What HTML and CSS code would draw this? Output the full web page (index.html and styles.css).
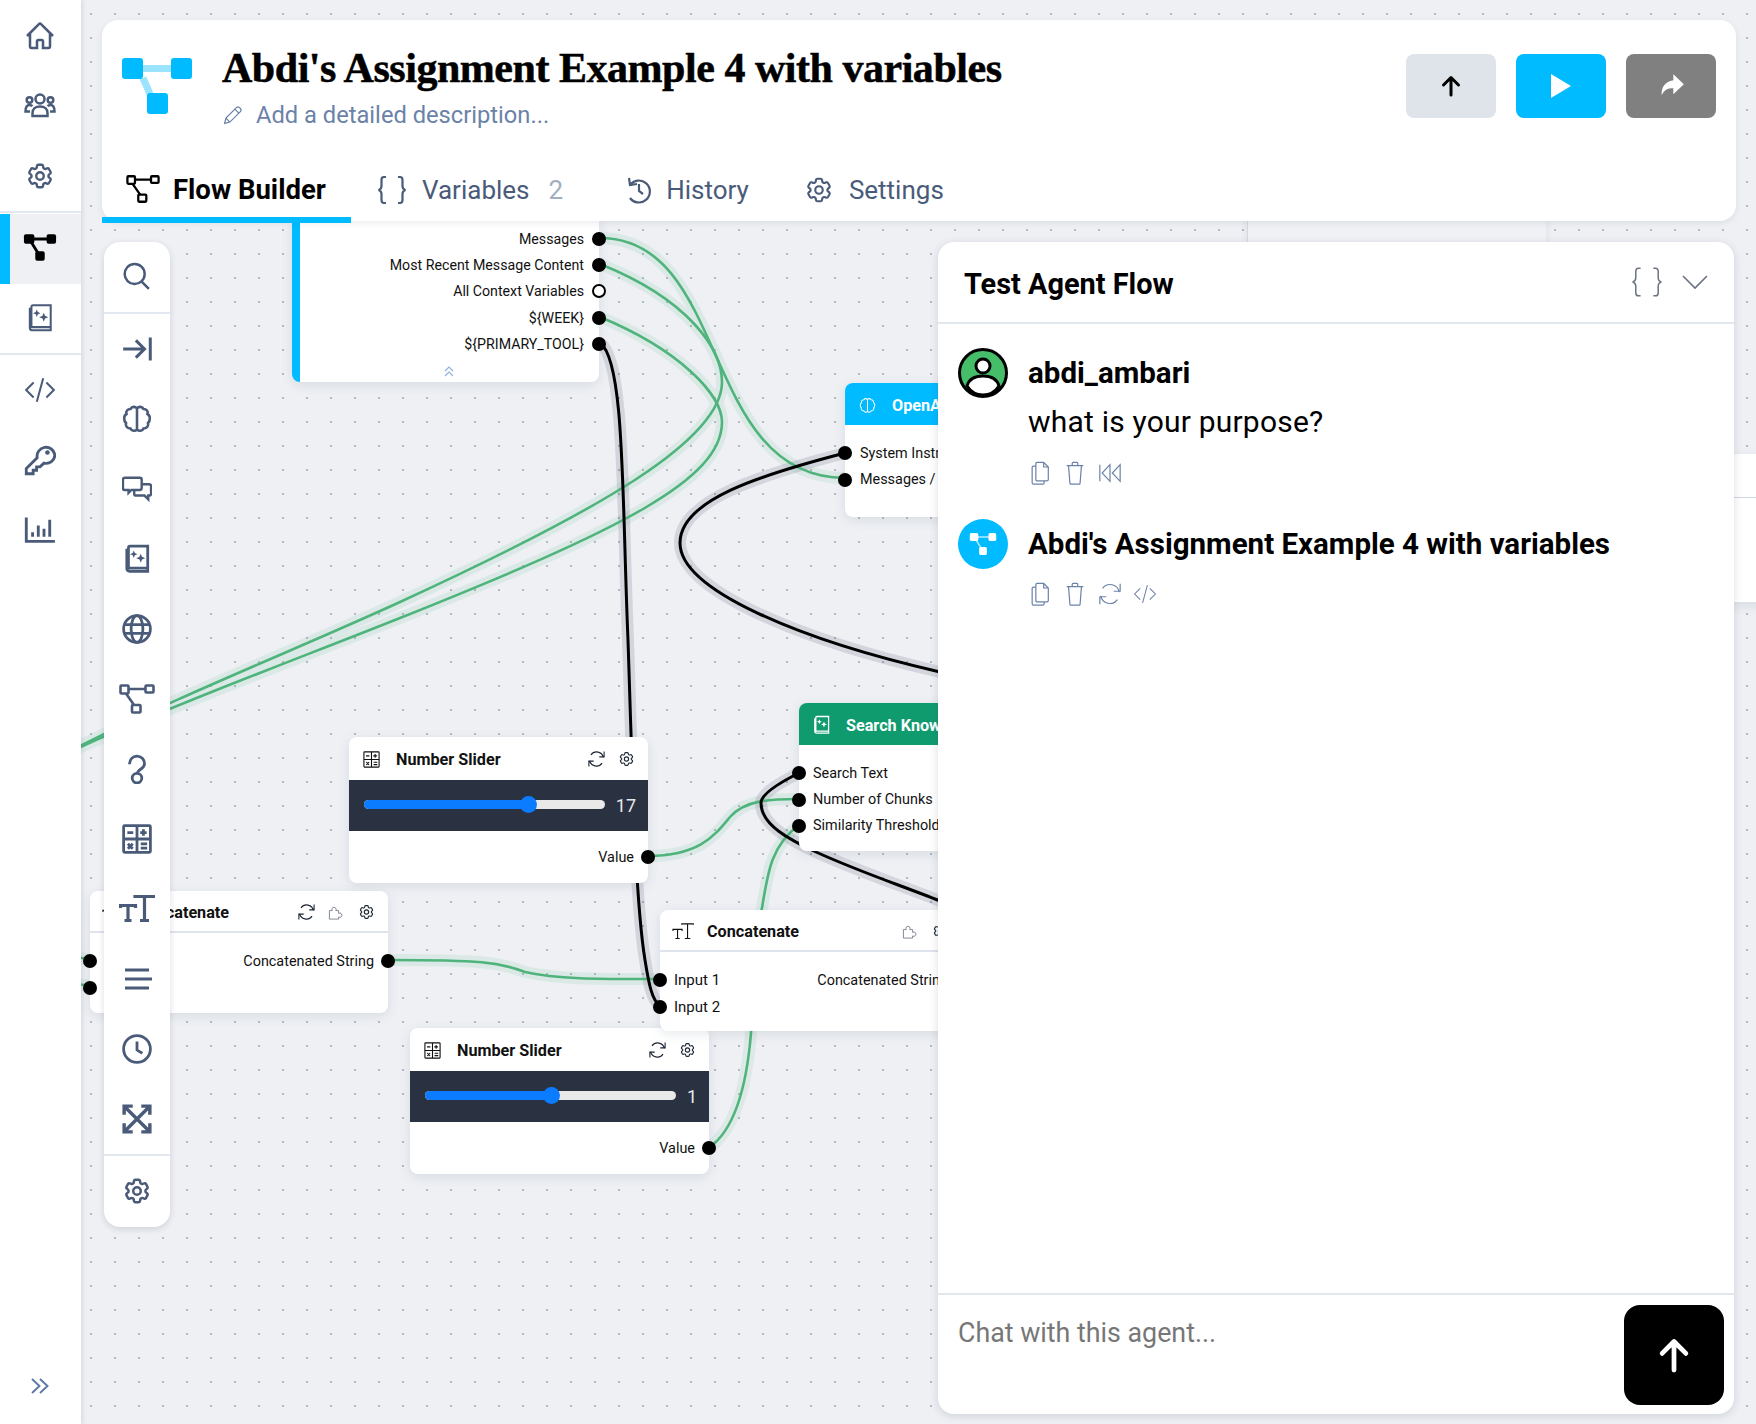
FILE: index.html
```html
<!DOCTYPE html>
<html lang="en">
<head>
	<meta charset="UTF-8">
	<title>Abdi's Assignment Example 4 with variables</title>
	<link rel="stylesheet" href="styles.css">
</head>
<body>
	<svg class="defs" width="0" height="0">
		<symbol id="i-home" viewBox="0 0 24 24"><path d="M2.25 12l8.954-8.955c.44-.439 1.152-.439 1.591 0L21.75 12M4.5 9.75v10.125c0 .621.504 1.125 1.125 1.125H9.75v-4.875c0-.621.504-1.125 1.125-1.125h2.25c.621 0 1.125.504 1.125 1.125V21h4.125c.621 0 1.125-.504 1.125-1.125V9.75"/></symbol>
		<symbol id="i-users" viewBox="0 0 32 28"><circle cx="16" cy="7" r="4.500"/><circle cx="5.500" cy="8" r="2.800"/><circle cx="26.500" cy="8" r="2.800"/><path d="M8.500 24v-3c0-4 3-6.500 7.500-6.500s7.500 2.500 7.500 6.500v3zM6 19.500H1.500c0-4 1.500-6.500 4-6.500 1.200 0 2.200.4 3 1.200M26 19.500h4.500c0-4-1.500-6.500-4-6.500-1.200 0-2.200.4-3 1.200"/></symbol>
		<symbol id="i-gear" viewBox="0 0 24 24"><path d="M9.594 3.94c.09-.542.56-.94 1.11-.94h2.593c.55 0 1.02.398 1.11.94l.213 1.281c.063.374.313.686.645.87.074.04.147.083.22.127.324.196.72.257 1.075.124l1.217-.456a1.125 1.125 0 011.37.49l1.296 2.247a1.125 1.125 0 01-.26 1.431l-1.003.827c-.293.24-.438.613-.431.992a6.759 6.759 0 010 .255c-.007.378.138.75.43.99l1.005.828c.424.35.534.954.26 1.43l-1.298 2.247a1.125 1.125 0 01-1.369.491l-1.217-.456c-.355-.133-.75-.072-1.076.124a6.57 6.57 0 01-.22.128c-.331.183-.581.495-.644.869l-.213 1.28c-.09.543-.56.941-1.11.941h-2.594c-.55 0-1.02-.398-1.11-.94l-.213-1.281c-.062-.374-.312-.686-.644-.87a6.52 6.52 0 01-.22-.127c-.325-.196-.72-.257-1.076-.124l-1.217.456a1.125 1.125 0 01-1.369-.49l-1.297-2.247a1.125 1.125 0 01.26-1.431l1.004-.827c.292-.24.437-.613.43-.992a6.932 6.932 0 010-.255c.007-.378-.138-.75-.43-.99l-1.004-.828a1.125 1.125 0 01-.26-1.43l1.297-2.247a1.125 1.125 0 011.37-.491l1.216.456c.356.133.751.072 1.076-.124.072-.044.146-.087.22-.128.332-.183.582-.495.644-.869l.214-1.281z"/><path d="M15 12a3 3 0 11-6 0 3 3 0 016 0z"/></symbol>
		<symbol id="i-flow" viewBox="0 0 36 30"><rect x="1.500" y="1.500" width="8" height="8" rx="1"/><rect x="26.500" y="1.500" width="8" height="7" rx="1"/><rect x="13" y="21" width="8.500" height="7.500" rx="1"/><path d="M9.500 5h17M7 9.500l8 11.500"/></symbol>
		<symbol id="i-book" viewBox="0 0 24 28"><path d="M4 23V3.500c0-1 .8-1.500 1.500-1.500H22v23.500H5c-1.500 0-2.500-1-2.500-2.500V4.500M3 22.500h19"/><path class="fill" d="M9 6l1 2.500L12.500 9.500 10 10.500 9 13 8 10.500 5.500 9.500 8 8.500zM15.500 9l1.200 3 3 1.200-3 1.200-1.200 3-1.200-3-3-1.200 3-1.200z"/></symbol>
		<symbol id="i-code" viewBox="0 0 30 26"><path d="M9 6L2 13l7 7M21 6l7 7-7 7M18 2l-6 22"/></symbol>
		<symbol id="i-key" viewBox="0 0 28 28"><path d="M27 9.500a7.500 7.500 0 0 1-9.500 7.200L14 20h-3v3H8v3H2v-4.500L11.500 12a7.500 7.500 0 1 1 15.500-2.500z"/><circle class="fill" cx="20.500" cy="7.500" r="2"/></symbol>
		<symbol id="i-chart" viewBox="0 0 28 24"><path d="M2 1v21h25M7.500 18v-4M12.500 18V8M17.500 18v-7M22.500 18V3"/></symbol>
		<symbol id="i-search" viewBox="0 0 24 24"><path d="M21.500 21.500l-6-6m0 0A8 8 0 1 0 4.200 4.200a8 8 0 0 0 11.300 11.300z"/></symbol>
		<symbol id="i-collapse" viewBox="0 0 26 24"><path d="M1 12h18M12 4.500l7.500 7.500-7.500 7.500M24.500 2v20"/></symbol>
		<symbol id="i-brain" viewBox="0 0 30 28"><path d="M15 2v24M15 3.500C13 1 9.500 1.500 8.500 4 5.500 4 3.500 6.500 4.500 9 1.500 10.500 1.500 16 4 18c-1 3 1.500 5.500 4.500 5.500 1 2.500 4.500 3 6.500 1 2 2 5.500 1.500 6.500-1 3 0 5.500-2.500 4.500-5.500 2.500-2 2.500-7.500-.5-9 1-2.500-1-5-4-5-1-2.500-4.500-3-6.500-.500z"/></symbol>
		<symbol id="i-chat" viewBox="0 0 32 28"><path d="M3 2h16c1 0 2 1 2 2v9c0 1-1 2-2 2H10l-3 3v-3H3c-1 0-2-1-2-2V4c0-1 1-2 2-2z"/><path d="M21 9h8c1 0 2 1 2 2v8c0 1-1 2-2 2h-1v4l-4-4h-9c-1 0-2-1-2-2v-4"/></symbol>
		<symbol id="i-globe" viewBox="0 0 28 28"><circle cx="14" cy="14" r="12.500"/><ellipse cx="14" cy="14" rx="5.500" ry="12.500"/><path d="M2.500 10h23M2.500 18h23"/></symbol>
		<symbol id="i-help" viewBox="0 0 20 28"><path d="M3 9.500C3 5 6 2 10 2s7 3 7 7c0 5-6 5-7 9"/><circle cx="10" cy="22.500" r="4.500"/></symbol>
		<symbol id="i-calc" viewBox="0 0 28 28"><rect x="1.500" y="1.500" width="25" height="25" rx="1"/><path d="M14 1.500v25M1.500 14h25M5 8h5.500M17 8h6M20 5v6M5.500 18.500l4.500 4.500M10 18.500L5.500 23M17.500 18.500h6M17.500 22.500h6"/></symbol>
		<symbol id="i-text" viewBox="0 0 36 28"><path d="M16 3V1.500h19V3M25.500 1.500V25M21 25.500h9M1.500 13v-2.500h15V13M9 10.500V25M5.500 25.500h7"/></symbol>
		<symbol id="i-lines" viewBox="0 0 30 22"><path d="M3 2h24M3 11h27M3 20h24"/></symbol>
		<symbol id="i-clock" viewBox="0 0 28 28"><circle cx="14" cy="14" r="12.500"/><path d="M14 7v8l5 3"/></symbol>
		<symbol id="i-expand" viewBox="0 0 28 28"><path d="M3 3l22 22M25 3L3 25M2 10V2h8M18 2h8v8M26 18v8h-8M10 26H2v-8"/></symbol>
		<symbol id="i-chevrons" viewBox="0 0 20 18"><path d="M2 2l7.500 7L2 16M10 2l7.500 7-7.500 7"/></symbol>
		<symbol id="i-pencil" viewBox="0 0 24 24"><path d="M3 21l1.500-6L16.500 3c1-1 2.500-1 3.500 0l1 1c1 1 1 2.500 0 3.500L9 19.500zM15 5l4.500 4.500M4.500 15L9 19.500"/></symbol>
		<symbol id="i-braces" viewBox="0 0 30 30"><path d="M9 2H7C5 2 4.500 3 4.500 5v6c0 2-1 3.500-3 4 2 .5 3 2 3 4v6c0 2 .5 3 2.500 3h2M21 2h2c2 0 2.500 1 2.500 3v6c0 2 1 3.500 3 4-2 .5-3 2-3 4v6c0 2-.5 3-2.500 3h-2"/></symbol>
		<symbol id="i-history" viewBox="0 0 28 30"><path d="M5 3l1 7 7-1M6 10a11 11 0 1 1 0 13M15 9v7l4 3"/></symbol>
		<symbol id="i-copy" viewBox="0 0 20 26"><path d="M7 1.500h7l5 5V20c0 1-.5 1.500-1.500 1.500H7c-1 0-1.500-.5-1.500-1.500V3C5.500 2 6 1.500 7 1.500zM14 1.500v5h5M5.500 5.500H3C2 5.500 1.500 6 1.500 7v16.500c0 1 .5 1.500 1.500 1.500h10c1 0 1.500-.5 1.500-1.500v-2"/></symbol>
		<symbol id="i-trash" viewBox="0 0 20 26"><path d="M1 5h18M3 5l1.500 19c0 .5.5 1 1 1h9c.5 0 1-.5 1-1L17 5M7 5V2.500C7 2 7.500 1.500 8 1.500h4c.5 0 1 .5 1 1V5"/></symbol>
		<symbol id="i-rewind" viewBox="0 0 26 24"><path d="M2 3v18M13 3L4.500 12l8.500 9zM24 3l-8.500 9 8.500 9z"/></symbol>
		<symbol id="i-refresh" viewBox="0 0 24 26"><path d="M22 11a10 10 0 0 0-18-4M2 15a10 10 0 0 0 18 4M23 2v8h-7M1 24v-8h7"/></symbol>
		<symbol id="i-puzzle" viewBox="0 0 24 24"><path d="M2 10h4a3 3 0 1 1 5 0h4v4a3 3 0 1 1 0 5v3H2z"/></symbol>
	</svg>

	<aside class="sidebar">
		<a class="side-item"><svg class="ico"><use href="#i-home"/></svg></a>
		<a class="side-item"><svg class="ico ico-users"><use href="#i-users"/></svg></a>
		<a class="side-item"><svg class="ico ico-m"><use href="#i-gear"/></svg></a>
		<div class="rule"></div>
		<a class="side-item active">
			<svg class="flow-solid" viewBox="0 0 36 30"><path d="M8 6h20M8 8l8 13" stroke="#000" stroke-width="3" fill="none"/><rect x="1" y="1" width="11" height="10" rx="2"/><rect x="25" y="1" width="10" height="10" rx="2"/><rect x="13" y="19" width="10" height="10" rx="2"/></svg>
		</a>
		<a class="side-item"><svg class="ico ico-m"><use href="#i-book"/></svg></a>
		<div class="rule"></div>
		<a class="side-item"><svg class="ico"><use href="#i-code"/></svg></a>
		<a class="side-item"><svg class="ico ico-users"><use href="#i-key"/></svg></a>
		<a class="side-item"><svg class="ico ico-users"><use href="#i-chart"/></svg></a>
		<a class="side-item side-bottom"><svg class="ico ico-s"><use href="#i-chevrons"/></svg></a>
	</aside>

	<main class="canvas">
		<div class="ghost-node"></div>
		<div class="edge-node"></div>

		<svg class="wires" viewBox="81 0 1675 1424">
			<defs>
				<g id="wires-green">
					<path d="M600 238C730 238 700 478 845 478"/>
					<path d="M600 264C690 300 722 350 722 382C722 440 600 510 400 602C300 648 180 695 76 748"/>
					<path d="M600 317C680 350 722 395 722 422C722 480 620 530 400 618C300 658 180 702 76 749"/>
					<path d="M648 856C700 856 715 835 730 817C745 800 770 799 799 799"/>
					<path d="M388 960C480 960 500 962 525 972C560 980 610 979 660 979"/>
					<path d="M710 1147C740 1125 748 1070 751 1033C755 980 755 930 762 908C768 870 772 845 799 825"/>
					<path d="M78 957L90 960M78 984L90 986"/>
				</g>
				<g id="wires-black">
					<path d="M600 343C625 360 622 500 628 640C632 760 635 900 645 960C649 985 652 1000 660 1006"/>
					<path d="M845 453C760 475 680 500 680 543C680 590 800 640 940 672"/>
					<path d="M799 773C775 785 761 795 761 803C761 825 790 840 816 852C860 872 900 885 940 901"/>
				</g>
			</defs>
			<use href="#wires-green" class="halo-green"/>
			<use href="#wires-black" class="halo-black"/>
			<use href="#wires-green" class="line-green"/>
			<use href="#wires-black" class="line-black"/>
		</svg>

		<section class="node node-output">
			<div class="row out">Messages<i class="handle right"></i></div>
			<div class="row out">Most Recent Message Content<i class="handle right"></i></div>
			<div class="row out">All Context Variables<i class="handle right hollow"></i></div>
			<div class="row out">${WEEK}<i class="handle right"></i></div>
			<div class="row out">${PRIMARY_TOOL}<i class="handle right"></i></div>
			<svg class="collapse-up" viewBox="0 0 12 12"><path d="M2 6l4-4 4 4M2 11l4-4 4 4"/></svg>
		</section>

		<section class="node node-openai">
			<header class="node-head blue"><svg class="ico-node"><use href="#i-brain"/></svg><b>OpenAI GPT</b></header>
			<div class="rows">
				<div class="row">System Instructions<i class="handle left"></i></div>
				<div class="row">Messages / Prompt<i class="handle left"></i></div>
			</div>
		</section>

		<section class="node node-search">
			<header class="node-head green"><svg class="ico-node"><use href="#i-book"/></svg><b>Search Knowledge</b></header>
			<div class="rows">
				<div class="row">Search Text<i class="handle left"></i></div>
				<div class="row">Number of Chunks<i class="handle left"></i></div>
				<div class="row">Similarity Threshold<i class="handle left"></i></div>
			</div>
		</section>

		<section class="node node-slider-a">
			<header class="node-head"><svg class="ico-node"><use href="#i-calc"/></svg><b>Number Slider</b><span class="node-tools"><svg class="ico-tool"><use href="#i-refresh"/></svg><svg class="ico-tool"><use href="#i-gear"/></svg></span></header>
			<div class="slider-band">
				<div class="track"><div class="fill-bar" style="width: 68.5%"></div></div>
				<span class="slider-val">17</span>
			</div>
			<div class="row out value">Value<i class="handle right"></i></div>
		</section>

		<section class="node node-slider-b">
			<header class="node-head"><svg class="ico-node"><use href="#i-calc"/></svg><b>Number Slider</b><span class="node-tools"><svg class="ico-tool"><use href="#i-refresh"/></svg><svg class="ico-tool"><use href="#i-gear"/></svg></span></header>
			<div class="slider-band">
				<div class="track"><div class="fill-bar" style="width: 50.5%"></div></div>
				<span class="slider-val">1</span>
			</div>
			<div class="row out value">Value<i class="handle right"></i></div>
		</section>

		<section class="node node-concat-a">
			<header class="node-head ruled"><svg class="ico-node"><use href="#i-text"/></svg><b>Concatenate</b><span class="node-tools"><svg class="ico-tool"><use href="#i-refresh"/></svg><svg class="ico-tool faint"><use href="#i-puzzle"/></svg><svg class="ico-tool"><use href="#i-gear"/></svg></span></header>
			<div class="rows">
				<div class="row out">Concatenated String<i class="handle left"></i><i class="handle right"></i></div>
				<div class="row"><i class="handle left"></i></div>
			</div>
		</section>

		<section class="node node-concat-b">
			<header class="node-head ruled"><svg class="ico-node"><use href="#i-text"/></svg><b>Concatenate</b><span class="node-tools"><svg class="ico-tool faint"><use href="#i-puzzle"/></svg><svg class="ico-tool"><use href="#i-gear"/></svg></span></header>
			<div class="rows">
				<div class="row split">Input 1<span>Concatenated String</span><i class="handle left"></i></div>
				<div class="row">Input 2<i class="handle left"></i></div>
			</div>
		</section>

		<nav class="toolbar">
			<a class="tool"><svg class="ico ico-t ico-24"><use href="#i-search"/></svg></a>
			<div class="rule"></div>
			<a class="tool"><svg class="ico ico-t"><use href="#i-collapse"/></svg></a>
			<a class="tool"><svg class="ico ico-t"><use href="#i-brain"/></svg></a>
			<a class="tool"><svg class="ico ico-t"><use href="#i-chat"/></svg></a>
			<a class="tool"><svg class="ico ico-t"><use href="#i-book"/></svg></a>
			<a class="tool"><svg class="ico ico-t"><use href="#i-globe"/></svg></a>
			<a class="tool"><svg class="ico ico-w"><use href="#i-flow"/></svg></a>
			<a class="tool"><svg class="ico ico-t"><use href="#i-help"/></svg></a>
			<a class="tool"><svg class="ico ico-t"><use href="#i-calc"/></svg></a>
			<a class="tool"><svg class="ico ico-w ico-bold"><use href="#i-text"/></svg></a>
			<a class="tool"><svg class="ico ico-t ico-bold"><use href="#i-lines"/></svg></a>
			<a class="tool"><svg class="ico ico-t"><use href="#i-clock"/></svg></a>
			<a class="tool"><svg class="ico ico-t ico-bold"><use href="#i-expand"/></svg></a>
			<div class="rule"></div>
			<a class="tool"><svg class="ico ico-t ico-24"><use href="#i-gear"/></svg></a>
		</nav>

		<header class="topbar">
			<div class="top-row">
				<svg class="logo" viewBox="0 0 72 56">
					<path d="M20 10.500h30M22 20l7 16" stroke="#9be4ff" stroke-width="7" fill="none"/>
					<rect x="1" y="0" width="21" height="21" rx="3"/><rect x="50" y="0" width="21" height="21" rx="3"/><rect x="26" y="35" width="21" height="21" rx="3"/>
				</svg>
				<div class="title-wrap">
					<h1>Abdi's Assignment Example 4 with variables</h1>
					<p class="desc"><svg class="ico-pencil"><use href="#i-pencil"/></svg>Add a detailed description...</p>
				</div>
				<div class="actions">
					<button class="btn btn-grey"><svg viewBox="0 0 24 24" class="arrow dark"><path d="M12 21V4M4.500 11L12 3.500 19.500 11"/></svg></button>
					<button class="btn btn-blue"><svg viewBox="0 0 24 24" class="solid"><path d="M2 0L22 12 2 24z"/></svg></button>
					<button class="btn btn-dark"><svg viewBox="0 0 24 24" class="solid share"><path d="M14 2l9 8.500-9 8.500v-5c-5 0-8 1.500-10 6-.5-7 3-12 10-13z"/></svg></button>
				</div>
			</div>
			<div class="tabs">
				<a class="tab active"><svg class="ico tab-ico strong"><use href="#i-flow"/></svg>Flow Builder</a>
				<a class="tab tab-vars"><svg class="ico tab-ico"><use href="#i-braces"/></svg>Variables<span class="count">2</span></a>
				<a class="tab tab-hist"><svg class="ico tab-ico"><use href="#i-history"/></svg>History</a>
				<a class="tab tab-set"><svg class="ico tab-ico"><use href="#i-gear"/></svg>Settings</a>
			</div>
		</header>

		<section class="chat">
			<header class="chat-head">
				<h2>Test Agent Flow</h2>
				<svg class="chat-ico"><use href="#i-braces"/></svg>
				<svg class="chat-ico chev" viewBox="0 0 26 16"><path d="M1 2l12 12L25 2"/></svg>
			</header>
			<div class="messages">
				<article class="msg msg-user">
					<svg class="avatar" viewBox="0 0 50 50"><circle cx="25" cy="25" r="23.500" fill="#46bd68" stroke="#000" stroke-width="3"/><circle cx="25" cy="18" r="7" fill="#fff" stroke="#000" stroke-width="3"/><path d="M9 38c2-7 8-10 16-10s14 3 16 10c-4 6-10 9-16 9S13 44 9 38z" fill="#fff" stroke="#000" stroke-width="3"/></svg>
					<div class="msg-body">
						<div class="msg-name">abdi_ambari</div>
						<div class="msg-text">what is your purpose?</div>
						<div class="msg-actions">
							<svg><use href="#i-copy"/></svg><svg><use href="#i-trash"/></svg><svg><use href="#i-rewind"/></svg>
						</div>
					</div>
				</article>
				<article class="msg">
					<div class="avatar avatar-bot">
						<svg viewBox="0 0 36 30"><path d="M8 6h20M8 8l8 13" stroke="#fff" stroke-width="2" opacity=".7" fill="none"/><rect x="1" y="1" width="11" height="10" rx="2"/><rect x="25" y="1" width="10" height="10" rx="2"/><rect x="13" y="19" width="10" height="10" rx="2"/></svg>
					</div>
					<div class="msg-body">
						<div class="msg-name">Abdi's Assignment Example 4 with variables</div>
						<div class="msg-actions">
							<svg><use href="#i-copy"/></svg><svg><use href="#i-trash"/></svg><svg><use href="#i-refresh"/></svg><svg><use href="#i-code"/></svg>
						</div>
					</div>
				</article>
			</div>
			<footer class="chat-input">
				<div class="placeholder">Chat with this agent...</div>
				<button class="send"><svg viewBox="0 0 24 24" class="arrow light"><path d="M12 21.500V3.500M4.500 11L12 3.500 19.500 11"/></svg></button>
			</footer>
		</section>
	</main>
</body>
</html>
```

FILE: styles.css
```css
* {
	box-sizing: border-box;
}
html, body {
	margin: 0;
	height: 100%;
}
body {
	display: flex;
	height: 1424px;
	overflow: hidden;
	font-family: "Roboto", "Liberation Sans", sans-serif;
	color: #000;
	background: #eef0f4;
}
svg {
	display: block;
}
.defs {
	position: absolute;
}
symbol path, symbol circle, symbol rect, symbol ellipse {
	fill: none;
	stroke: currentColor;
}
symbol .fill {
	fill: currentColor;
	stroke: none;
}
.rule {
	height: 2px;
	background: #e2e8f0;
	flex: none;
}

/* icons */
.ico {
	width: 32px;
	height: 32px;
	color: #4a5b7a;
	stroke-width: 1.9;
	overflow: visible;
}
.ico-users {
	stroke-width: 2.5;
}
.ico-m {
	width: 30px;
	height: 30px;
}
.ico-s {
	width: 20px;
	height: 18px;
	color: #5d78a8;
}
.ico-t {
	width: 30px;
	height: 30px;
	stroke-width: 2.6;
}
.ico-w {
	width: 36px;
	height: 30px;
	stroke-width: 2.6;
}
.ico-24 {
	stroke-width: 2;
}
.ico-bold {
	stroke-width: 3.2;
}

/* left nav */
.sidebar {
	width: 81px;
	flex: none;
	display: flex;
	flex-direction: column;
	padding-top: 1px;
	background: #fff;
	box-shadow: 2px 0 4px rgba(60, 70, 90, .12);
	z-index: 10;
	height: 100%;
}
.side-item {
	height: 70px;
	flex: none;
	display: flex;
	align-items: center;
	justify-content: center;
	padding-right: 1px;
}
.side-item.active {
	margin: 1px 0 -1px;
	background: #eef0f4;
	border-left: 10px solid #00bbff;
	padding-right: 11px;
}
.side-bottom {
	margin-top: auto;
	margin-bottom: 3px;
}
.flow-solid {
	width: 34px;
	height: 29px;
	margin-top: -3px;
	fill: #000;
}

/* flow canvas */
.canvas {
	position: relative;
	flex: 1;
	height: 100%;
	overflow: hidden;
	background-color: #eef0f4;
	background-image: radial-gradient(circle, #b4b8c0 1.1px, transparent 1.5px);
	background-size: 24px 24px;
	background-position: -2px 2px;
}
.wires {
	position: absolute;
	left: 0;
	top: 0;
	width: 1675px;
	height: 1424px;
	fill: none;
	stroke-linecap: round;
}
.halo-green {
	stroke: #4fb47c;
	stroke-width: 12;
	opacity: .11;
}
.halo-black {
	stroke: #3a3a55;
	stroke-width: 12;
	opacity: .14;
}
.line-green {
	stroke: #4fb47c;
	stroke-width: 2.6;
}
.line-black {
	stroke: #000;
	stroke-width: 3;
}
.ghost-node {
	position: absolute;
	left: 1166px;
	top: 200px;
	width: 299px;
	height: 42px;
	background: #eff1f5;
	border-left: 1px solid #d5d8de;
	box-shadow: 0 2px 8px rgba(60, 70, 90, .1);
}
.edge-node {
	position: absolute;
	left: 1650px;
	top: 454px;
	width: 60px;
	height: 148px;
	background: #fff;
	box-shadow: 0 4px 10px rgba(60, 70, 90, .12);
}
.edge-node::before {
	content: "";
	display: block;
	height: 43px;
	border-bottom: 1px solid #cfd6e2;
}

/* nodes */
.node {
	position: absolute;
	background: #fff;
	border-radius: 8px;
	box-shadow: 0 3px 12px rgba(60, 70, 90, .12);
	font-size: 14.4px;
	color: #111;
}
.node-output {
	left: 211px;
	top: 215px;
	width: 307px;
	height: 167px;
	padding-top: 11px;
	border-left: 8px solid #00bbff;
}
.node-openai {
	left: 764px;
	top: 383px;
	width: 300px;
	height: 134px;
}
.node-search {
	left: 718px;
	top: 703px;
	width: 300px;
	height: 148px;
}
.node-slider-a {
	left: 268px;
	top: 737px;
	width: 299px;
	height: 146px;
}
.node-slider-b {
	left: 329px;
	top: 1028px;
	width: 299px;
	height: 146px;
}
.node-concat-a {
	left: 9px;
	top: 891px;
	width: 298px;
	height: 122px;
}
.node-concat-b {
	left: 579px;
	top: 910px;
	width: 302px;
	height: 121px;
}
.node-head {
	display: flex;
	align-items: center;
	height: 42px;
	padding: 2px 13px 0 14px;
	border-radius: 8px 8px 0 0;
	font-size: 16.200px;
}
.node-head b {
	margin-left: 16px;
	font-weight: 700;
}
.node-head.blue {
	background: #00bbff;
	color: #fff;
}
.node-head.green {
	background: #0f9b6e;
	color: #fff;
}
.node-head.ruled {
	padding-left: 12px;
	border-bottom: 2px solid #dfe3ec;
}
.ico-node {
	width: 17px;
	height: 17px;
	stroke-width: 1.8;
	flex: none;
	overflow: visible;
}
.green .ico-node {
	height: 20px;
}
.ruled .ico-node {
	width: 22px;
}
.ruled b {
	margin-left: 13px;
}
.node-tools {
	display: flex;
	align-items: center;
	gap: 13px;
	margin-left: auto;
}
.ico-tool {
	width: 17px;
	height: 18px;
	stroke-width: 1.6;
	color: #1f2937;
}
.ico-tool.faint {
	color: #6f7785;
	stroke-width: 1.2;
}
.rows {
	padding-top: 15px;
}
.row {
	position: relative;
	display: flex;
	align-items: center;
	height: 26.4px;
	padding: 0 14px;
	white-space: nowrap;
	overflow: visible;
}
.row.out {
	justify-content: flex-end;
}
.row.split {
	justify-content: space-between;
}
.row.value {
	margin-top: 13px;
}
.node-output .row {
	height: 26.200px;
	padding-right: 15px;
	font-size: 14.2px;
}
.node-openai .row {
	padding-left: 15px;
}
.node-concat-b .row {
	font-size: 15px;
}
.node-concat-b .row span {
	font-size: 14.4px;
}
.handle {
	position: absolute;
	top: 50%;
	width: 14px;
	height: 14px;
	margin-top: -7px;
	border-radius: 50%;
	background: #000;
}
.handle.left {
	left: -7px;
}
.handle.right {
	right: -7px;
}
.handle.hollow {
	background: #fff;
	border: 2px solid #000;
}
.collapse-up {
	position: absolute;
	left: 143px;
	top: 150px;
	width: 12px;
	height: 12px;
	fill: none;
	stroke: #8fb3d9;
	stroke-width: 1.2;
}
.slider-band {
	display: flex;
	align-items: center;
	gap: 11px;
	height: 51px;
	padding: 0 12px 0 15px;
	margin-top: 1px;
	background: #2a3140;
}
.track {
	flex: 1;
	position: relative;
	height: 9px;
	margin-top: -2px;
	border-radius: 5px;
	background: #e9e9e9;
}
.fill-bar {
	position: relative;
	height: 100%;
	border-radius: 5px;
	background: #0b7cff;
}
.fill-bar::after {
	content: "";
	position: absolute;
	right: -8px;
	top: -4px;
	width: 17px;
	height: 17px;
	border-radius: 50%;
	background: #0b7cff;
}
.slider-val {
	font-size: 18px;
	color: #e6e8ec;
}

/* palette */
.toolbar {
	position: absolute;
	left: 23px;
	top: 242px;
	width: 66px;
	height: 985px;
	display: flex;
	flex-direction: column;
	background: #fff;
	border-radius: 16px;
	box-shadow: 0 2px 6px rgba(60, 70, 90, .18);
	overflow: hidden;
}
.tool {
	height: 70px;
	flex: none;
	display: flex;
	align-items: center;
	justify-content: center;
}

/* top bar */
.topbar {
	position: absolute;
	left: 21px;
	top: 20px;
	width: 1634px;
	height: 201px;
	display: flex;
	flex-direction: column;
	background: #fff;
	border-radius: 16px;
	box-shadow: 0 2px 6px rgba(60, 70, 90, .1);
}
.top-row {
	display: flex;
	padding: 28px 20px 0 19px;
}
.logo {
	width: 72px;
	height: 56px;
	margin-top: 10px;
	fill: #00bbff;
	flex: none;
}
.title-wrap {
	margin-left: 29px;
}
h1 {
	margin: 0;
	font: 700 42px/40px "Liberation Serif", serif;
	letter-spacing: -.47px;
	-webkit-text-stroke: .5px #000;
}
.desc {
	display: flex;
	align-items: center;
	margin: 12px 0 0;
	font-size: 23.700px;
	line-height: 30px;
	color: #6b82a8;
}
.ico-pencil {
	width: 21px;
	height: 21px;
	margin-right: 13px;
	stroke-width: 1.4;
}
.actions {
	display: flex;
	gap: 20px;
	margin: 6px 0 0 auto;
}
.btn {
	width: 90px;
	height: 64px;
	padding: 0;
	border: 0;
	border-radius: 8px;
	display: flex;
	align-items: center;
	justify-content: center;
}
.btn-grey {
	background: #dfe4ea;
}
.btn-blue {
	background: #00bbff;
}
.btn-dark {
	background: #808080;
}
.btn svg {
	width: 24px;
	height: 24px;
}
.btn .share {
	width: 28px;
	height: 28px;
}
.solid {
	fill: #fff;
}
.arrow {
	fill: none;
	stroke-width: 3;
	stroke-linecap: round;
	stroke-linejoin: round;
}
.arrow.dark {
	stroke: #000;
}
.arrow.light {
	stroke: #fff;
}
.tabs {
	display: flex;
	height: 64px;
	margin-top: auto;
	margin-bottom: -2px;
}
.tab {
	display: flex;
	align-items: center;
	padding-bottom: 2px;
	font-size: 26px;
	color: #4a5b7a;
	white-space: nowrap;
}
.tab-ico {
	width: 30px;
	height: 30px;
	margin-right: 15px;
	stroke-width: 2.2;
}
.tab-hist .tab-ico {
	margin-right: 13px;
}
.tab-set .tab-ico {
	stroke-width: 1.7;
}
.tab.active {
	width: 249px;
	padding: 2px 0 0 24px;
	border-bottom: 6px solid #00bbff;
	font-size: 27.500px;
	color: #000;
	font-weight: 700;
}
.tab.active .tab-ico {
	width: 34px;
	margin-right: 13px;
}
.tab-ico.strong {
	color: #000;
	stroke-width: 2.4;
}
.tab-vars {
	padding: 0 30px 2px 26px;
}
.tab-hist {
	padding: 0 27px 2px 30px;
}
.tab-set {
	padding-left: 28px;
}
.count {
	margin-left: 19px;
	color: #a0aec0;
}

/* test panel */
.chat {
	position: absolute;
	left: 857px;
	top: 242px;
	width: 796px;
	height: 1172px;
	display: flex;
	flex-direction: column;
	background: #fff;
	border-radius: 16px;
	box-shadow: 0 2px 8px rgba(60, 70, 90, .18);
}
.chat-head {
	display: flex;
	align-items: center;
	height: 82px;
	padding: 0 26px;
	border-bottom: 2px solid #e2e8f0;
}
h2 {
	margin: 4px 0 0;
	font-size: 28.900px;
	font-weight: 700;
}
.chat-ico {
	width: 32px;
	height: 32px;
	margin-left: auto;
	margin-top: -1px;
	color: #6b7280;
	stroke-width: 1.4;
}
.chat-ico.chev {
	width: 26px;
	height: 16px;
	margin-left: 19px;
	fill: none;
	stroke: #6b7280;
	stroke-width: 1.6;
}
.messages {
	flex: 1;
	padding: 24px 20px 0;
}
.msg {
	display: flex;
	gap: 20px;
	margin-bottom: 34px;
}
.avatar {
	width: 50px;
	height: 50px;
	flex: none;
}
.avatar-bot {
	display: flex;
	align-items: center;
	justify-content: center;
	border-radius: 50%;
	background: #00bbff;
}
.avatar-bot svg {
	width: 28px;
	height: 24px;
	fill: #fff;
}
.msg-name {
	padding-top: 1px;
	font-size: 29.500px;
	line-height: 49px;
	font-weight: 700;
}
.msg-text {
	font-size: 30px;
	line-height: 48px;
	letter-spacing: .2px;
}
.msg-actions {
	display: flex;
	gap: 11px;
	margin-top: 13px;
	color: #6b82a8;
}
.msg-user .msg-actions {
	margin-top: 15px;
}
.msg-actions svg {
	width: 24px;
	height: 24px;
	stroke-width: 1.3;
	overflow: visible;
}
.chat-input {
	display: flex;
	height: 121px;
	padding: 10px 10px 10px 20px;
	border-top: 2px solid #e2e8f0;
}
.placeholder {
	flex: 1;
	padding-top: 10px;
	font-size: 26.800px;
	line-height: 36px;
	color: #777;
}
.send {
	width: 100px;
	height: 100px;
	padding: 0;
	border: 0;
	border-radius: 16px;
	background: #000;
	display: flex;
	align-items: center;
	justify-content: center;
}
.send svg {
	width: 38px;
	height: 38px;
}
```
